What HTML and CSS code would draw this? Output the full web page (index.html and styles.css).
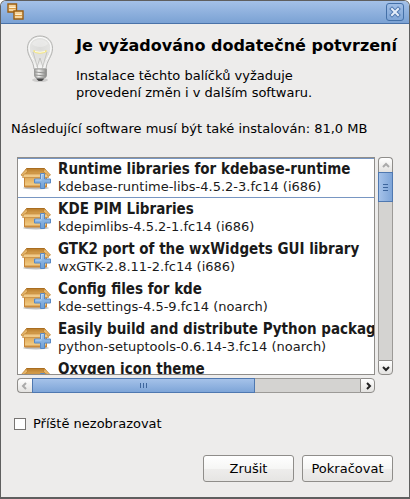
FILE: index.html
```html
<!DOCTYPE html>
<html lang="cs">
<head>
<meta charset="utf-8">
<title>Je vyžadováno dodatečné potvrzení</title>
<link rel="stylesheet" href="styles.css">
</head>
<body>
<svg class="defs" aria-hidden="true">
  <defs>
    <linearGradient id="front" x1="0" y1="0" x2="0" y2="1"><stop offset="0" stop-color="#c98d3d"/><stop offset=".35" stop-color="#e3b062"/><stop offset=".8" stop-color="#efc880"/><stop offset="1" stop-color="#c98331"/></linearGradient>
    <linearGradient id="inside" x1="0" y1="0" x2="0" y2="1"><stop offset="0" stop-color="#b87c2c"/><stop offset="1" stop-color="#dba653"/></linearGradient>
    <linearGradient id="plus" x1="0" y1="0" x2="0" y2="1"><stop offset="0" stop-color="#a3c5eb"/><stop offset="1" stop-color="#6f9fd6"/></linearGradient>
    <symbol id="package" viewBox="0 0 32 24">
      <ellipse cx="16" cy="22" rx="13" ry="1.500" fill="#000" opacity=".25"/>
      <path d="M6.500 2.500h18l3 6h-24z" fill="url(#inside)" stroke="#a96d20"/>
      <path d="M4 8.500h23v12.500H4z" fill="url(#front)"/>
      <path d="M4.500 10v11h22V10" fill="none" stroke="#c58435"/>
      <path d="M6.500 2.500L1 9l2.500 1.500 4-5z" fill="#e6b76b" stroke="#b77a2a" stroke-width=".7"/>
      <path d="M24.500 2.500L30.500 9 28 10.500l-4.500-5z" fill="#e6b76b" stroke="#b77a2a" stroke-width=".7"/>
      <path d="M4 8h23l1.500 3.500h-26z" fill="#f0ca88" stroke="#c48a3c" stroke-width=".7"/>
      <path d="M20.500 7.500h4v5.500h6v4h-6v5.500h-4v-5.500h-6v-4h6z" fill="url(#plus)" stroke="#5889c4"/>
      <path d="M21.500 13V8.500h2M15.500 14h6" fill="none" stroke="#c3daf3" stroke-width=".8"/>
    </symbol>
  </defs>
</svg>
<div class="window">
  <header class="titlebar">
    <svg class="app-icon" width="18" height="18" viewBox="0 0 18 18" aria-hidden="true">
      <path d="M1 1h8.500v8H1z" fill="#f6d49c" stroke="#9b5d10" stroke-width="1.400"/>
      <path d="M2.500 4.500h6" stroke="#fff0d0"/><path d="M2 5.500h7" stroke="#d99a42"/>
      <path d="M7 8h9v8H7z" fill="#f6d49c" stroke="#9b5d10" stroke-width="1.400"/>
      <path d="M8.500 11.500h6" stroke="#fff0d0"/><path d="M8 12.500h7" stroke="#d99a42"/>
    </svg>
    <button class="close" type="button" aria-label="Zavřít">
      <svg width="12" height="12" viewBox="0 0 12 12"><path d="M3 3l6 6m0-6L3 9" stroke="#5179b0" stroke-width="4" stroke-linecap="square"/><path d="M3 3l6 6m0-6L3 9" stroke="#e5eefa" stroke-width="2" stroke-linecap="square"/></svg>
    </button>
  </header>
  <main class="content">
    <section class="intro">
      <svg class="bulb" width="28" height="48" viewBox="0 0 28 48" aria-hidden="true">
        <defs><radialGradient id="glass" cx=".5" cy=".35" r=".6"><stop offset="0" stop-color="#dcdcda"/><stop offset=".7" stop-color="#e4e4e2"/><stop offset="1" stop-color="#f5f5f4"/></radialGradient>
        <linearGradient id="metal"><stop offset="0" stop-color="#9c9c9a"/><stop offset=".35" stop-color="#f2f2f0"/><stop offset="1" stop-color="#858583"/></linearGradient></defs>
        <ellipse cx="14" cy="45" rx="8" ry="2" fill="#000" opacity=".13"/>
        <path d="M14 1C6.500 1 1.500 6 1.500 13.500c0 8 6 12 6.500 20.500h12c.5-8.500 6.500-12.500 6.500-20.500C26.500 6 21.500 1 14 1z" fill="url(#glass)" stroke="#b3b3b1"/>
        <path d="M14 2.500C8 2.500 3 7 3 13c0 5 2.500 8 4.500 12M20.500 25c2-4 4.500-7 4.500-12 0-6-5-10.500-11-10.500" fill="none" stroke="#fff"/>
        <path d="M6 9c2-6 14-6 16 0-4 4-12 4-16 0z" fill="#fff" opacity=".3"/>
        <path d="M7 17l5 17m9-17l-5 17M11 32l3-9 3 9" fill="none" stroke="#bcbcba" stroke-width=".8"/>
        <path d="M7.500 15.500q2 2.500 6.500 2.500t6.500-2.500" fill="none" stroke="#f4e683" stroke-width="1.500"/>
        <path d="M9 16.500q5 1.500 10 0" fill="none" stroke="#fffde6"/>
        <path d="M8.500 34h12v6q0 3-3 3h-6q-3 0-3-3z" fill="url(#metal)" stroke="#9a9a98"/>
        <path d="M9 37l11 1M9 40l11 1" stroke="#939391"/>
        <path d="M10 43.500h8.500L16 46h-3.500z" fill="#4a4a4a"/>
      </svg>
      <div class="message">
        <h1>Je vyžadováno dodatečné potvrzení</h1>
        <p>Instalace těchto balíčků vyžaduje<br>provedení změn i v dalším softwaru.</p>
      </div>
    </section>
    <p class="summary" id="summary">Následující software musí být také instalován: 81,0 MB</p>
    <section class="scroller">
      <ul class="packages" aria-labelledby="summary">
        <li class="current"><svg><use href="#package"/></svg><div><strong>Runtime libraries for kdebase-runtime</strong><span>kdebase-runtime-libs-4.5.2-3.fc14 (i686)</span></div></li>
        <li><svg><use href="#package"/></svg><div><strong>KDE PIM Libraries</strong><span>kdepimlibs-4.5.2-1.fc14 (i686)</span></div></li>
        <li><svg><use href="#package"/></svg><div><strong>GTK2 port of the wxWidgets GUI library</strong><span>wxGTK-2.8.11-2.fc14 (i686)</span></div></li>
        <li><svg><use href="#package"/></svg><div><strong>Config files for kde</strong><span>kde-settings-4.5-9.fc14 (noarch)</span></div></li>
        <li><svg><use href="#package"/></svg><div><strong>Easily build and distribute Python packages</strong><span>python-setuptools-0.6.14-3.fc14 (noarch)</span></div></li>
        <li><svg><use href="#package"/></svg><div><strong>Oxygen icon theme</strong><span>&nbsp;</span></div></li>
      </ul>
      <div class="bar vertical">
        <button type="button" aria-label="Nahoru" disabled><svg viewBox="0 0 8 8"><path d="M1 6l3-3 3 3"/></svg></button>
        <div class="track"><div class="thumb"><i></i><i></i><i></i></div></div>
        <button type="button" aria-label="Dolů"><svg viewBox="0 0 8 8"><path d="M1 3l3 3 3-3"/></svg></button>
      </div>
      <div class="bar horizontal">
        <button type="button" aria-label="Doleva" disabled><svg viewBox="0 0 8 8"><path d="M5 1L2 4l3 3"/></svg></button>
        <div class="track"><div class="thumb"><i></i><i></i><i></i></div></div>
        <button type="button" aria-label="Doprava"><svg viewBox="0 0 8 8"><path d="M3 1l3 3-3 3"/></svg></button>
      </div>
    </section>
    <label class="again"><input type="checkbox">Příště nezobrazovat</label>
    <footer class="actions">
      <button type="button">Zrušit</button>
      <button type="button">Pokračovat</button>
    </footer>
  </main>
</div>
</body>
</html>
```
FILE: styles.css
```css
* { box-sizing: border-box; }
body {
  margin: 0;
  background: #fff;
  color: #000;
  font: 13px/17px "DejaVu Sans", sans-serif;
}
h1, p, ul { margin: 0; padding: 0; }
button { font: inherit; color: inherit; padding: 0; }
svg { display: block; flex: none; }
.defs { position: absolute; width: 0; height: 0; }
.window {
  display: flex;
  flex-direction: column;
  height: 100vh;
  border: 1px solid #5f5f5f;
  border-bottom-width: 2px;
  border-radius: 6px 6px 0 0;
  background: #edeceb;
  overflow: hidden;
}
.titlebar {
  display: flex;
  flex: none;
  align-items: center;
  justify-content: space-between;
  height: 23px;
  padding: 0 5px 0 6px;
  border-bottom: 1px solid #4a72a8;
  background: linear-gradient(#a4c1e8, #7ba2d4);
}
.close {
  display: grid;
  place-items: center;
  width: 18px;
  height: 18px;
  border: 1px solid #4470a8;
  border-radius: 3px;
  background: linear-gradient(#a0bee6, #7fa5d6);
}
.close svg { fill: none; }
.content {
  display: flex;
  flex: 1;
  flex-direction: column;
  min-height: 0;
  padding: 11px 16px 15px 10px;
}
.intro { display: flex; gap: 22px; padding-left: 15px; }
.message { padding-top: 1px; }
.intro h1 {
  margin-bottom: 11px;
  font-size: 16px;
  line-height: 20px;
  white-space: nowrap;
}
.summary { margin-top: 19px; }
.scroller {
  display: grid;
  flex: 1;
  grid-template: minmax(0, 1fr) 15px / minmax(0, 1fr) 15px;
  gap: 3px;
  min-height: 0;
  margin: 20px 0 22px 6px;
}
.packages {
  overflow: hidden;
  border: 1px solid #8f8d8a;
  background: #fff;
  color: #1a1a1a;
  list-style: none;
}
.packages li {
  display: flex;
  align-items: center;
  gap: 6px;
  height: 40px;
  padding-left: 2px;
  border: 1px solid transparent;
  border-width: 1px 0;
}
.packages .current { border-color: #7896c2; }
.packages svg { width: 32px; height: 24px; }
.packages strong, .packages span { display: block; white-space: nowrap; }
.packages strong { font-family: "DejaVu Sans Condensed", "DejaVu Sans", sans-serif; font-size: 15px; }
.bar { display: flex; }
.bar button {
  display: grid;
  flex: none;
  place-items: center;
  width: 15px;
  height: 15px;
  border: 1px solid #8f8d8a;
  background: linear-gradient(#fff, #e3e2e0);
}
.bar svg { width: 8px; height: 8px; fill: none; stroke: #222; stroke-width: 2; }
.bar button:disabled svg { stroke: #aaa; }
.track { flex: 1; border: 1px solid #9c9a97; background: #d4d3d1; }
.thumb {
  display: flex;
  align-items: center;
  justify-content: center;
  gap: 2px;
  border: 1px solid #4f78b0;
}
.thumb i { background: #3d659c; }
.vertical { flex-direction: column; }
.vertical .track { border-width: 0 1px; }
.vertical .thumb { flex-direction: column; height: 30px; margin: 0 -1px; background: linear-gradient(90deg, #a5c2e9, #7ea5d8); }
.vertical i { width: 5px; height: 1px; }
.vertical button:first-child { border-radius: 4px 4px 0 0; border-bottom: 0; }
.vertical button:last-child { border-radius: 0 0 4px 4px; }
.horizontal .track { border-width: 1px 0; }
.horizontal .thumb { width: 68%; height: 15px; margin: -1px 0; background: linear-gradient(#a5c2e9, #7ea5d8); }
.horizontal i { width: 1px; height: 5px; }
.horizontal button:first-child { border-radius: 4px 0 0 4px; border-right: 0; }
.horizontal button:last-child { border-radius: 0 4px 4px 0; }
.again { display: flex; align-items: center; gap: 7px; padding-left: 3px; }
.again input {
  appearance: none;
  width: 12px;
  height: 12px;
  margin: 0;
  border: 1px solid #777573;
  background: #fff;
}
.actions { display: flex; justify-content: flex-end; gap: 8px; margin-top: 23px; }
.actions button {
  width: 91px;
  height: 27px;
  border: 1px solid #8f8d8a;
  border-radius: 3px;
  background: linear-gradient(#fff, #f6f6f5 50%, #eeedec 51%, #e6e5e3);
}
```
